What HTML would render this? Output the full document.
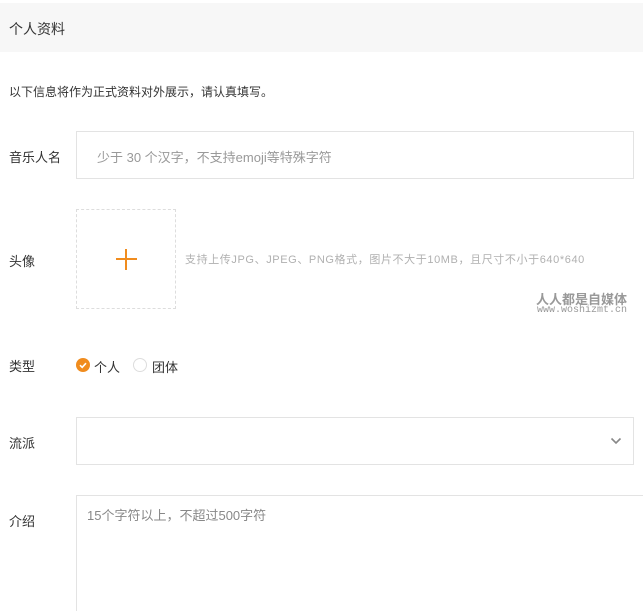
<!DOCTYPE html>
<html><head><meta charset="utf-8"><style>
*{margin:0;padding:0;box-sizing:border-box}
html,body{width:643px;height:611px;overflow:hidden}
body{background:#fff;font-family:"Liberation Sans","Noto Sans CJK SC",sans-serif;color:#333;position:relative}
.a{position:absolute;white-space:nowrap}
.hd{left:0;top:3px;width:643px;height:49px;background:#f7f7f7}
.box{position:absolute;border:1px solid #e3e3e3;background:#fff}
.lbl{font-size:13px;color:#333;left:9px}
</style></head><body>
<div class="a hd"></div>
<div class="a" style="left:9px;top:19px;font-size:14px;color:#333">个人资料</div>
<div class="a" style="left:9px;top:83px;font-size:12px;color:#333">以下信息将作为正式资料对外展示，请认真填写。</div>

<div class="a lbl" style="top:147px">音乐人名</div>
<div class="box" style="left:76px;top:131px;width:558px;height:48px"></div>
<div class="a" style="left:97px;top:147px;font-size:13px;color:#999">少于 30 个汉字，不支持emoji等特殊字符</div>

<div class="a lbl" style="top:251px">头像</div>
<div class="box" style="left:76px;top:209px;width:100px;height:100px;border:1px dashed #ddd"></div>
<div class="a" style="left:116px;top:258px;width:21px;height:2px;background:#f08c1e"></div>
<div class="a" style="left:125px;top:249px;width:2px;height:21px;background:#f08c1e"></div>
<div class="a" style="left:185px;top:251px;font-size:11px;color:#b0b0b0;letter-spacing:0.6px">支持上传JPG、JPEG、PNG格式，图片不大于10MB，且尺寸不小于640*640</div>
<div class="a" style="right:16px;top:289px;font-size:13px;color:#999;font-weight:bold">人人都是自媒体</div>
<div class="a" style="right:16px;top:305px;font-size:10px;color:#999;font-family:'Liberation Mono',monospace">www.woshizmt.cn</div>

<div class="a lbl" style="top:356px">类型</div>
<div class="a" style="left:76px;top:358px;width:14px;height:14px;border-radius:50%;background:#f08c1e"></div>
<svg class="a" style="left:76px;top:358px" width="14" height="14"><path d="M4 7.2L6.2 9.3L10 5.2" stroke="#fff" stroke-width="1.6" fill="none"/></svg>
<div class="a" style="left:94px;top:357px;font-size:13px;color:#333">个人</div>
<div class="a" style="left:133px;top:358px;width:14px;height:14px;border-radius:50%;border:1px solid #ddd"></div>
<div class="a" style="left:152px;top:357px;font-size:13px;color:#333">团体</div>

<div class="a lbl" style="top:433px">流派</div>
<div class="box" style="left:76px;top:417px;width:558px;height:48px"></div>
<svg class="a" style="left:610px;top:436px" width="12" height="10"><path d="M1.5 2.5L6 7L10.5 2.5" stroke="#888" stroke-width="1.6" fill="none"/></svg>

<div class="a lbl" style="top:511px">介绍</div>
<div class="box" style="left:76px;top:495px;width:580px;height:130px"></div>
<div class="a" style="left:87px;top:505px;font-size:13px;color:#888">15个字符以上，不超过500字符</div>
</body></html>
